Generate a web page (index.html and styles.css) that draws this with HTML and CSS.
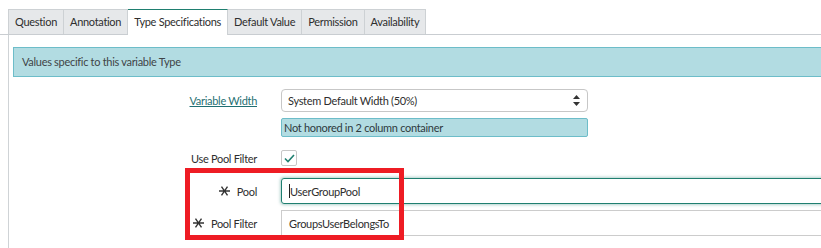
FILE: index.html
```html
<!DOCTYPE html>
<html>
<head>
  <title>Variable - Type Specifications</title>
  <link rel="stylesheet" href="styles.css">
</head>
<body>
  <div class="page">
    <div class="tabs">
      <div class="tab">Question</div>
      <div class="tab">Annotation</div>
      <div class="tab active">Type Specifications</div>
      <div class="tab">Default Value</div>
      <div class="tab">Permission</div>
      <div class="tab">Availability</div>
    </div>

    <div class="panel">
      <div class="section-head">Values specific to this variable Type</div>

      <div class="form">
        <div class="label row-select"><a class="link" href="#">Variable Width</a></div>
        <div class="field">
          <div class="select">
            <span>System Default Width (50%)</span>
            <svg class="arrows" width="7" height="11" viewBox="0 0 7 11">
              <path d="M3.5 0 L7 4 L0 4 Z M0 7 L7 7 L3.5 11 Z" fill="#333"/>
            </svg>
          </div>
          <div class="note">Not honored in 2 column container</div>
        </div>

        <div class="label row-check">Use Pool Filter</div>
        <div class="field">
          <div class="checkbox">
            <svg width="11" height="9" viewBox="0 0 11 9">
              <path d="M1 4.5 L4 7.5 L10 1" fill="none" stroke="#1f7f70" stroke-width="1.6"/>
            </svg>
          </div>
        </div>

        <div class="label row-input">
          <svg class="req" width="11" height="10" viewBox="0 0 11 10">
            <path d="M0 5 H11 M2.5 0.7 L8.5 9.3 M8.5 0.7 L2.5 9.3" stroke="#333" stroke-width="1.4"/>
          </svg>
          <span>Pool</span>
        </div>
        <div class="field">
          <div class="input focused"><span class="caret"></span>UserGroupPool</div>
        </div>

        <div class="label row-input">
          <svg class="req" width="11" height="10" viewBox="0 0 11 10">
            <path d="M0 5 H11 M2.5 0.7 L8.5 9.3 M8.5 0.7 L2.5 9.3" stroke="#333" stroke-width="1.4"/>
          </svg>
          <span>Pool Filter</span>
        </div>
        <div class="field">
          <div class="input">GroupsUserBelongsTo</div>
        </div>
      </div>
    </div>

    <div class="highlight"></div>
  </div>
</body>
</html>
```

FILE: styles.css
```css
html, body {
  margin: 0;
  padding: 0;
  overflow: hidden;
  background-color: #ffffff;
}

body {
  font-family: Lato, "Open Sans", sans-serif;
  font-size: 11px;
  letter-spacing: -0.3px;
  color: #2e2e2e;
}

.page {
  position: relative;
  width: 860px;
  height: 248px;
}

/* Tabs */

.tabs {
  display: flex;
  padding: 9px 0 0 8px;
  border-bottom: 1px solid #c9cdd1;
}

.tab {
  height: 24px;
  line-height: 24px;
  padding: 0 6px;
  background-color: #e6e8ea;
  border: 1px solid #cdd1d4;
  border-left: none;
  border-bottom: none;
  margin-bottom: -1px;
}

.tab:first-child {
  border-left: 1px solid #cdd1d4;
}

.tab.active {
  background-color: #ffffff;
  border-top: 1px solid #1f7f70;
  height: 25px;
}

/* Panel */

.panel {
  margin-left: 8px;
  border-left: 1px solid #cfd3d6;
  padding: 12px 0 20px 4px;
}

.section-head {
  height: 28px;
  line-height: 28px;
  padding-left: 8px;
  background-color: #b2dce2;
  border: 1px solid #6dbdc9;
  color: #3f4447;
}

.form {
  display: grid;
  grid-template-columns: 248px 1fr;
  column-gap: 24px;
  margin-left: -4px;
  padding-top: 12px;
}

.label {
  display: flex;
  justify-content: flex-end;
  align-items: center;
  gap: 7px;
  white-space: nowrap;
}

.row-select {
  height: 23px;
}

.row-check {
  height: 16px;
  margin-top: 13px;
}

.row-input {
  height: 26px;
}

.link {
  color: #1f6f73;
  text-decoration: underline;
}

.field {
  display: flex;
  flex-direction: column;
  align-items: flex-start;
}

.select {
  width: 307px;
  height: 23px;
  box-sizing: border-box;
  display: flex;
  align-items: center;
  justify-content: space-between;
  padding: 0 6px;
  border: 1px solid #c7c7c7;
  border-radius: 4px;
}

.arrows {
  margin-right: 1px;
}

.note {
  width: 307px;
  height: 19px;
  box-sizing: border-box;
  margin-top: 6px;
  padding-left: 2px;
  line-height: 17px;
  background-color: #b2dce2;
  border: 1px solid #6dbdc9;
  border-radius: 2px;
  color: #2e3a3d;
}

.checkbox {
  width: 16px;
  height: 16px;
  box-sizing: border-box;
  margin: 13px 0 12px 0;
  border: 1px solid #c7c7c7;
  border-radius: 2px;
  display: flex;
  align-items: center;
  justify-content: center;
}

.req {
  flex: none;
}

.input {
  width: 560px;
  height: 26px;
  box-sizing: border-box;
  display: flex;
  align-items: center;
  padding-left: 7px;
  border: 1px solid #cccccc;
  margin-bottom: 6px;
}

.input.focused {
  border-color: #1f7f70;
  border-radius: 3px;
  box-shadow: 0 0 3px 1px rgba(31, 127, 112, 0.35);
}

.caret {
  display: inline-block;
  width: 1px;
  height: 14px;
  background-color: #222;
}

/* Red annotation box drawn over the screenshot */

.highlight {
  position: absolute;
  left: 185px;
  top: 168px;
  width: 219px;
  height: 72px;
  box-sizing: border-box;
  border: 5px solid #ee1c24;
}
```
